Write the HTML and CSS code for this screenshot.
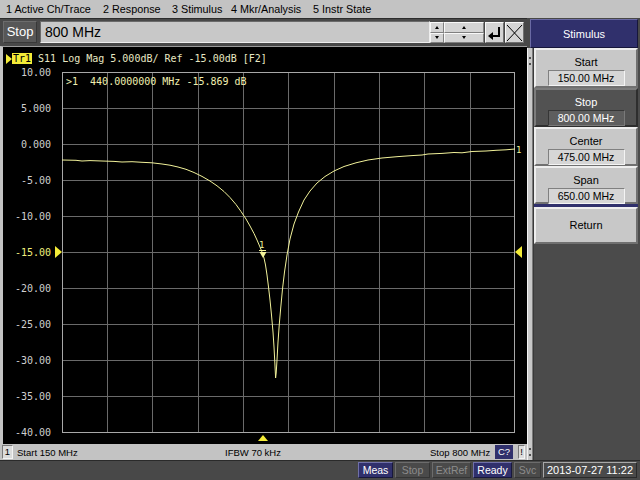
FILE: index.html
```html
<!DOCTYPE html>
<html>
<head>
<meta charset="utf-8">
<title>Stimulus</title>
<link rel="stylesheet" href="styles.css">
</head>
<body>
<div class="screen">
  <nav class="menubar">
    <span class="mi m1">1 Active Ch/Trace</span>
    <span class="mi m2">2 Response</span>
    <span class="mi m3">3 Stimulus</span>
    <span class="mi m4">4 Mkr/Analysis</span>
    <span class="mi m5">5 Instr State</span>
  </nav>
  <div class="workspace">
    <div class="leftcol">
      <div class="entrybar">
        <div class="entrylabel">Stop</div>
        <div class="entryfield">800 MHz</div>
        <div class="spin small"><span class="sb"><i class="up"></i></span><span class="sb"><i class="dn"></i></span></div>
        <div class="spin wide"><span class="sb"><i class="up"></i></span><span class="sb"><i class="dn"></i></span></div>
        <div class="ebtn">
          <svg width="17" height="18" viewBox="0 0 17 18"><path d="M13 3V12H6" fill="none" stroke="#000" stroke-width="2"/><path d="M2 12L7 8V16Z" fill="#000"/></svg>
        </div>
        <div class="ebtn">
          <svg width="17" height="18" viewBox="0 0 17 18"><path d="M1 1L16 17M16 1L1 17" fill="none" stroke="#000" stroke-width="1"/></svg>
        </div>
      </div>
      <div class="chart">
        <div class="chead"><span class="ptr"></span><span class="trbox">Tr1</span><span class="htxt">S11 Log Mag 5.000dB/ Ref -15.00dB [F2]</span></div>
        <div class="plotrow">
          <div class="yaxis">
            <div class="yl">10.00</div>
            <div class="yl">5.000</div>
            <div class="yl">0.000</div>
            <div class="yl">-5.00</div>
            <div class="yl">-10.00</div>
            <div class="yl ref">-15.00</div>
            <div class="yl">-20.00</div>
            <div class="yl">-25.00</div>
            <div class="yl">-30.00</div>
            <div class="yl">-35.00</div>
            <div class="yl">-40.00</div>
          </div>
          <div class="ltri"><span class="tri-r"></span></div>
          <div class="plot">
            <svg class="grid" width="453" height="361" viewBox="0 0 453 361">
              <g stroke="#6a6a6a" stroke-width="1">
                <path d="M45.5 0V361M90.5 0V361M136.5 0V361M181.5 0V361M226.5 0V361M272.5 0V361M317.5 0V361M362.5 0V361M408.5 0V361"/>
                <path d="M0 36.5H453M0 72.5H453M0 108.5H453M0 144.5H453M0 180.5H453M0 216.5H453M0 252.5H453M0 288.5H453M0 324.5H453"/>
              </g>
              <rect x="0.5" y="0.5" width="452" height="360" fill="none" stroke="#a8a8a8"/>
              <polyline fill="none" stroke="#f2f29a" stroke-width="1" points="0,88 14,88.3 20,89 28,88.6 40,89 52,89.4 60,90 70,89.7 80,90.3 90,90.8 100,92 108,93.2 116,95 124,97.3 132,100.5 140,104.4 148,109 155,113.8 162,119.5 168,125.5 174,132.5 179,139.5 184,147 188,154 192,161.5 195,168 198,175 200,180 202,186 203.5,193 205,203 206.5,215 208,228 209.5,243 211,260 212,275 212.8,290 213.3,300 213.6,306 214.2,301 215,288 216,270 217.3,252 218.8,235 220.5,217 222.5,200 225,183 228,167 232,152 236.5,140 242,128 248,119 255,111 263,104.5 272,99 282,94.5 294,90.8 306,88 320,86 336,84.6 350,83.6 360,83 366,82 380,81.4 392,80.5 400,80.8 410,79.5 424,79 434,78.3 444,77.8 453,77"/>
              <text x="197" y="176" class="mk">1</text>
              <path d="M197 178.5H204" stroke="#f2f29a"/>
              <path d="M197.5 180H204.5L201 186Z" fill="#f2f29a"/>
              <text x="454" y="81" class="mk">1</text>
            </svg>
            <div class="readout">&gt;1  440.0000000 MHz -15.869 dB</div>
          </div>
          <div class="rtri"><span class="tri-l"></span></div>
        </div>
        <div class="xrow"><span class="tri-u"></span></div>
      </div>
      <div class="status">
        <span class="chbox">1</span>
        <span class="st-start">Start 150 MHz</span>
        <span class="st-ifbw">IFBW 70 kHz</span>
        <span class="st-stop">Stop 800 MHz</span>
        <span class="st-c">C?</span>
        <span class="st-x">!</span>
      </div>
    </div>
    <div class="rightcol">
      <div class="stimhead">Stimulus</div>
      <div class="rbody">
        <div class="strip"><span class="tick"></span><span class="tick bottom"></span></div>
        <div class="panel">
          <div class="sbtn h40"><span class="lbl">Start</span><span class="val">150.00 MHz</span></div>
          <div class="sbtn active"><span class="lbl">Stop</span><span class="val">800.00 MHz</span></div>
          <div class="sbtn"><span class="lbl">Center</span><span class="val">475.00 MHz</span></div>
          <div class="sbtn h38"><span class="lbl">Span</span><span class="val">650.00 MHz</span></div>
          <div class="sep"></div>
          <div class="sbtn ret"><span class="lbl">Return</span></div>
        </div>
      </div>
    </div>
  </div>
  <div class="bottombar">
    <span class="ind on w35">Meas</span>
    <span class="ind off w35">Stop</span>
    <span class="ind off w39">ExtRef</span>
    <span class="ind on w39">Ready</span>
    <span class="ind off w27">Svc</span>
    <span class="ind date">2013-07-27 11:22</span>
  </div>
</div>
</body>
</html>
```

FILE: styles.css
```css
* { box-sizing: border-box; margin: 0; padding: 0; }
html, body { width: 640px; height: 480px; overflow: hidden; background: #484848; }
body { font-family: "Liberation Sans", Arial, sans-serif; }

.screen { display: flex; flex-direction: column; width: 640px; height: 480px; }

/* menu */
.menubar { height: 18px; background: #c3c3c3; display: flex; align-items: center; padding-left: 6px; font-size: 10.8px; color: #000; white-space: nowrap; }
.m1 { width: 97px; }
.m2 { width: 69px; }
.m3 { width: 59px; }
.m4 { width: 82px; }

.workspace { display: flex; height: 442px; }
.leftcol { width: 527px; display: flex; flex-direction: column; }

/* entry bar */
.entrybar { height: 28px; background: #484848; border-top: 1px solid #2c2c2c; display: flex; align-items: flex-start; padding: 2px 0 0 3px; }
.entrylabel { width: 34px; height: 22px; background: #575757; color: #fff; font-size: 13px; line-height: 20px; text-align: center; border: 1px solid; border-color: #6c6c6c #383838 #383838 #6c6c6c; }
.entryfield { margin-left: 3px; width: 390px; height: 22px; background: #c8c8c8; border: 1px solid; border-color: #6a6a6a #eeeeee #eeeeee #6a6a6a; font-size: 14px; line-height: 20px; padding-left: 4px; color: #000; }
.spin { display: flex; flex-direction: column; height: 21px; margin-top: 1px; }
.spin.small { width: 14px; }
.spin.wide { width: 40px; }
.sb { flex: 1; background: #d4d4d4; border: 1px solid; border-color: #f8f8f8 #808080 #808080 #f8f8f8; display: flex; align-items: center; justify-content: center; }
.sb i { display: block; width: 0; height: 0; border-left: 2px solid transparent; border-right: 2px solid transparent; }
.sb .up { border-bottom: 3px solid #000; }
.sb .dn { border-top: 3px solid #000; }
.ebtn { width: 19px; height: 21px; margin-top: 1px; margin-left: 1px; background: #d4d4d4; border: 1px solid; border-color: #f8f8f8 #707070 #707070 #f8f8f8; display: flex; align-items: center; justify-content: center; }

/* chart */
.chart { height: 398px; background: #000; border-top: 1px solid #9a9a9a; border-left: 3px solid #c3c3c3; font-family: "DejaVu Sans Mono", "Liberation Mono", monospace; font-size: 10px; color: #d0d0d0; overflow: hidden; }
.chead { height: 17px; display: flex; align-items: flex-end; padding-left: 3px; }
.ptr { width: 0; height: 0; border-left: 6px solid #f4ec38; border-top: 5px solid transparent; border-bottom: 5px solid transparent; margin-bottom: 0.5px; }
.trbox { display: block; background: #f4ec38; color: #000; height: 11px; line-height: 11px; padding: 0 1px; }
.htxt { display: block; margin-left: 6px; color: #e8e8c4; white-space: pre; line-height: 11px; }

.plotrow { margin-top: 8px; height: 361px; display: flex; }
.yaxis { width: 52px; margin-top: -18px; align-self: flex-start; }
.yl { height: 36.1px; display: flex; align-items: center; justify-content: flex-end; padding-right: 4px; color: #cfcfcf; }
.yl.ref { color: #f0f07c; }
.ltri, .rtri { width: 7px; padding-top: 174px; }
.tri-r { display: block; width: 0; height: 0; border-left: 7px solid #f4ec38; border-top: 6px solid transparent; border-bottom: 6px solid transparent; }
.tri-l { display: block; width: 0; height: 0; border-right: 7px solid #f4ec38; border-top: 6px solid transparent; border-bottom: 6px solid transparent; }
.plot { position: relative; width: 453px; height: 361px; }
.grid { display: block; overflow: visible; }
.mk { font-family: "DejaVu Sans Mono", monospace; font-size: 9px; fill: #f2f29a; }
.readout { position: absolute; left: 4px; top: 5px; color: #f0f0b0; white-space: pre; line-height: 10px; }
.xrow { height: 11px; padding: 2px 0 0 255px; }
.tri-u { display: block; width: 0; height: 0; border-bottom: 6px solid #f4ec38; border-left: 5.5px solid transparent; border-right: 5.5px solid transparent; }

/* status */
.status { height: 16px; background: #c3c3c3; display: flex; align-items: center; font-size: 9.5px; color: #000; white-space: nowrap; }
.chbox { margin-left: 2px; width: 11px; height: 14px; background: #dcdcdc; border: 1px solid; border-color: #7a7a7a #f4f4f4 #f4f4f4 #7a7a7a; text-align: center; line-height: 12px; }
.st-start { margin-left: 4px; width: 208px; }
.st-ifbw { width: 205px; }
.st-stop { width: 65px; }
.st-c { width: 18px; height: 14px; background: #30306c; color: #fff; text-align: center; line-height: 14px; }
.st-x { margin-left: 5px; width: 7px; height: 14px; background: #dcdcdc; border: 1px solid; border-color: #7a7a7a #f4f4f4 #f4f4f4 #7a7a7a; text-align: center; line-height: 12px; }

/* right column */
.rightcol { width: 113px; display: flex; flex-direction: column; background: #484848; }
.stimhead { margin: 1px 2px 0 3px; height: 29px; background: #30306c; color: #fff; font-size: 11px; display: flex; align-items: center; justify-content: center; border: 1px solid; border-color: #6a6aa4 #16163a #16163a #6a6aa4; }
.rbody { flex: 1; display: flex; }
.strip { width: 7px; background: #c8c8c8; border-left: 1px solid #f2f2f2; border-right: 1px solid #7a7a7a; position: relative; }
.tick { position: absolute; left: 1px; top: 9px; width: 2px; height: 8px; border-top: 2px solid #505050; border-bottom: 2px solid #505050; }
.tick.bottom { top: auto; bottom: 4px; }
.panel { flex: 1; display: flex; flex-direction: column; padding-right: 2px; background: #4b4b4b; border-left: 1px solid #3a3a3a; }
.sbtn { width: 104px; height: 39px; flex: none; background: #c8c8c8; border: 2px solid; border-color: #eeeeee #707070 #707070 #eeeeee; display: flex; flex-direction: column; align-items: center; font-size: 11px; color: #000; }
.sbtn.h40 { height: 40px; }
.sbtn.h38 { height: 38px; }
.sbtn .lbl { line-height: 13px; margin-top: 6px; }
.sbtn .val { width: 77px; height: 16px; margin-top: 1px; background: #d6d6d6; border: 1px solid; border-color: #808080 #f4f4f4 #f4f4f4 #808080; font-size: 10.5px; line-height: 14px; text-align: center; }
.sbtn.active { background: #525252; color: #fff; border-color: #7c7c7c #2e2e2e #2e2e2e #7c7c7c; }
.sbtn.active .val { background: #5e5e5e; border-color: #363636 #7a7a7a #7a7a7a #363636; }
.sep { height: 3px; flex: none; background: #30306c; width: 104px; }
.sbtn.ret { height: 37px; justify-content: center; }
.sbtn.ret .lbl { margin-top: 0; }

/* bottom bar */
.bottombar { height: 20px; background: #484848; border-top: 1px solid #2a2a2a; display: flex; justify-content: flex-end; align-items: flex-start; padding: 1px 3px 0 0; gap: 2px; font-size: 10.5px; white-space: nowrap; }
.ind { height: 16px; border: 1px solid; line-height: 14px; text-align: center; }
.ind.on { background: #30306c; color: #fff; border-color: #7070a8 #18183c #18183c #7070a8; }
.ind.off { background: #4a4a4a; color: #8c8c8c; border-color: #6c6c6c #353535 #353535 #6c6c6c; }
.w35 { width: 35px; }
.w39 { width: 39px; }
.w27 { width: 27px; }
.ind.date { width: 94px; background: #4a4a4a; color: #fff; font-size: 11px; border-color: #a8a8a8 #2a2a2a #2a2a2a #a8a8a8; }
```
